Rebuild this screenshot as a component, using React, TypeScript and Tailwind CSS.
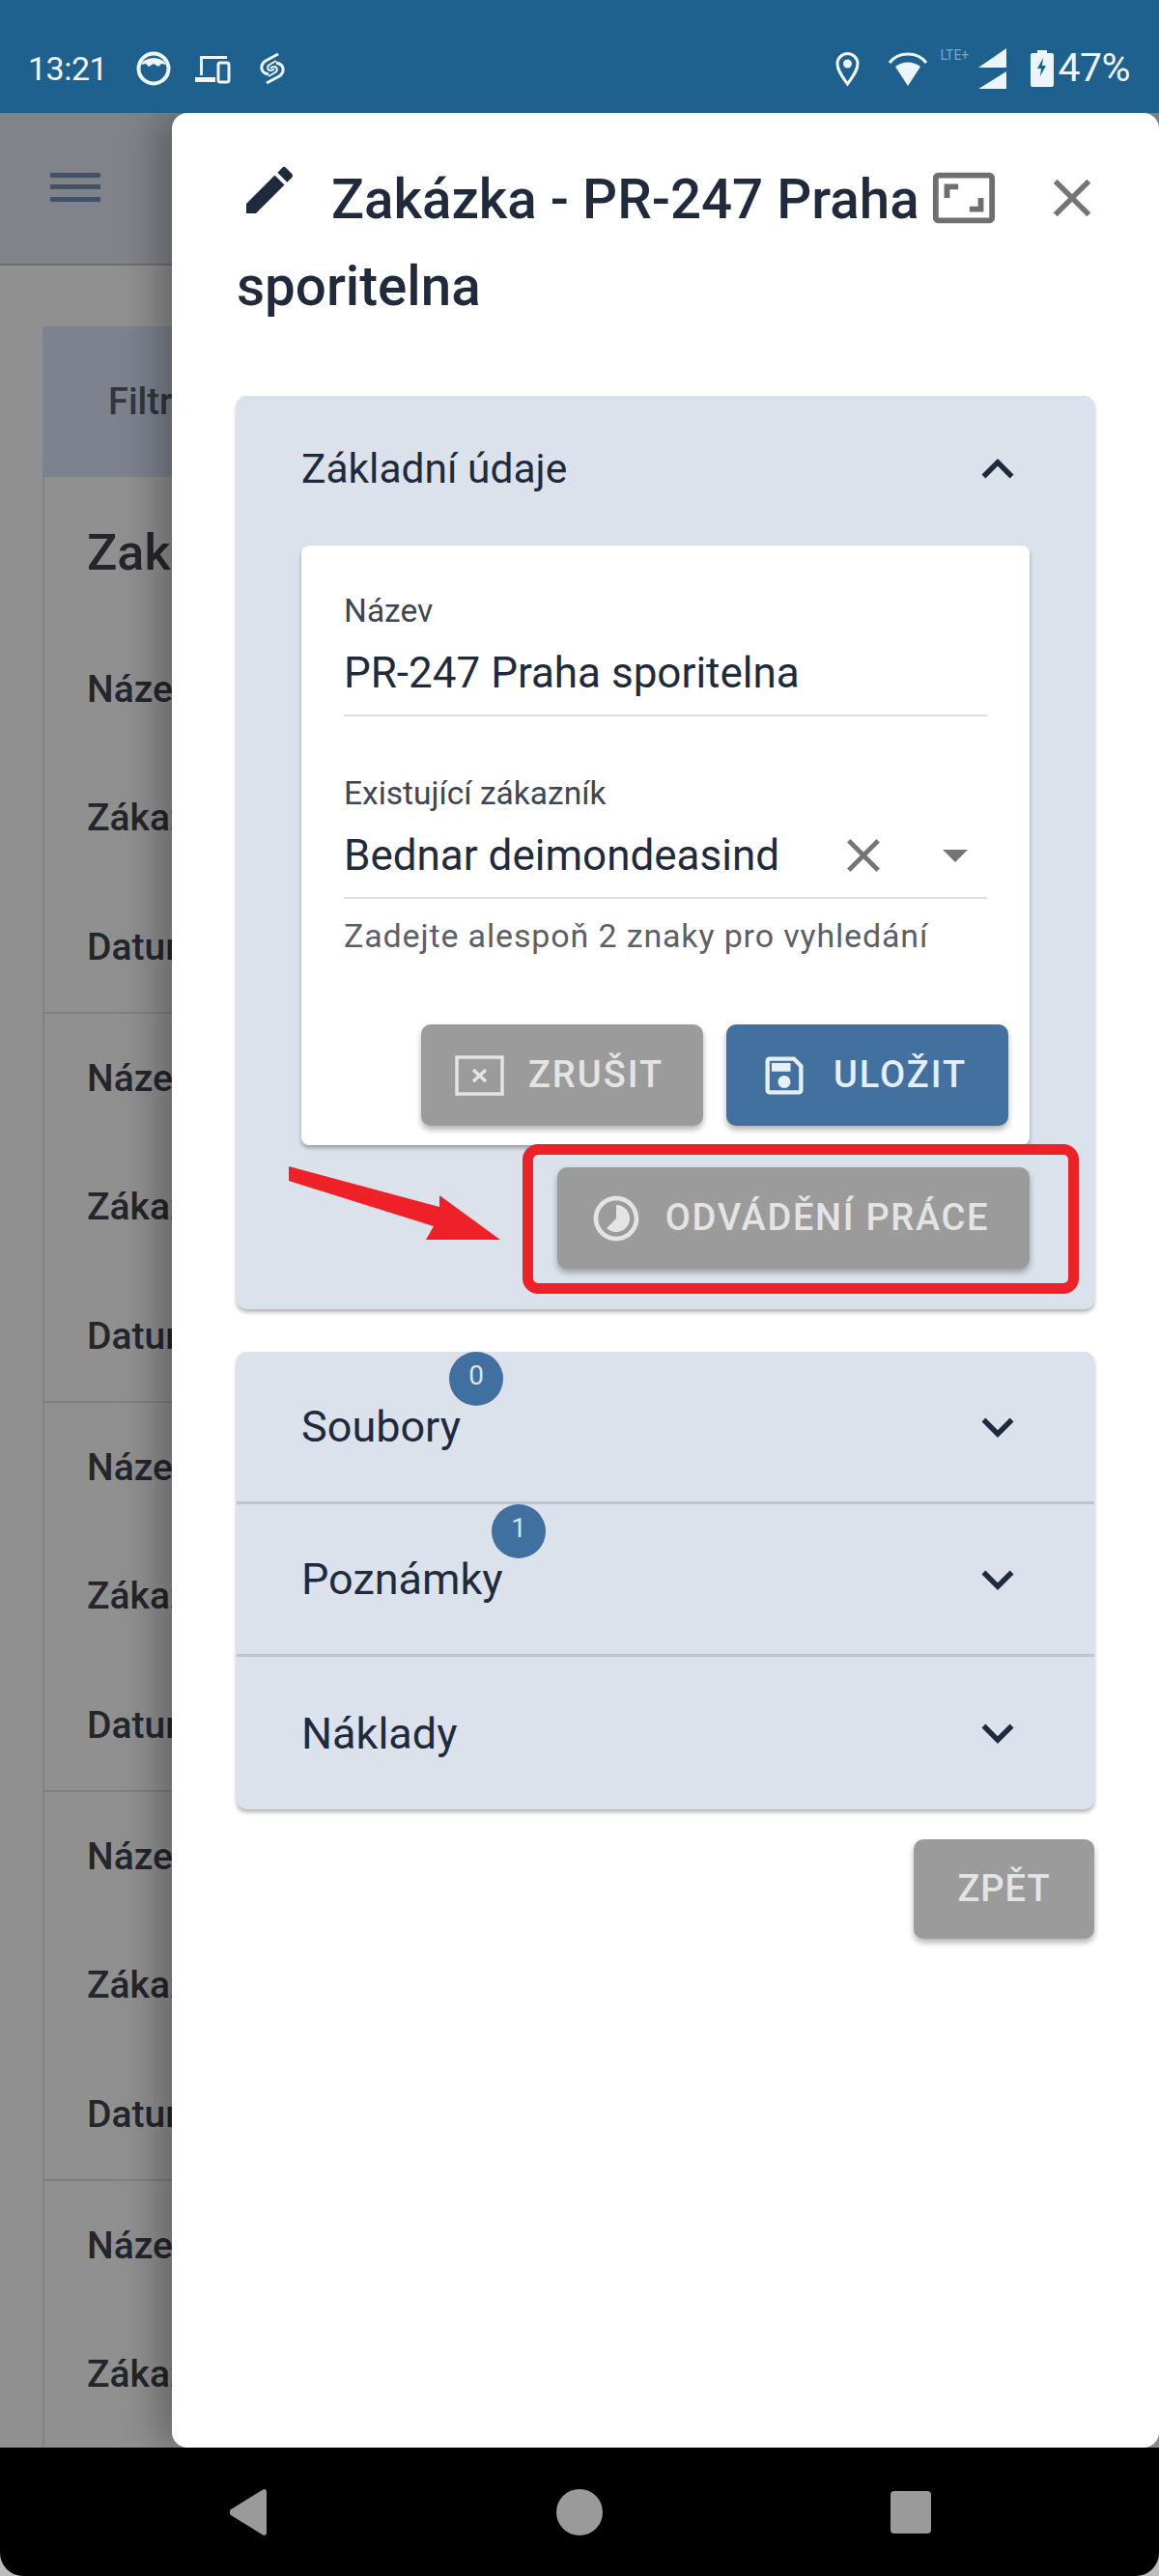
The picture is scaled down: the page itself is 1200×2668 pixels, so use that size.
const MUI = {
  edit: 'M3 17.25V21h3.75L17.81 9.94l-3.75-3.75L3 17.25zM20.71 7.04c.39-.39.39-1.02 0-1.41l-2.34-2.34a.9959.9959 0 0 0-1.41 0l-1.83 1.83 3.75 3.75 1.83-1.83z',
  close: 'M19 6.41 17.59 5 12 10.59 6.41 5 5 6.41 10.59 12 5 17.59 6.41 19 12 13.41 17.59 19 19 17.59 13.41 12z',
  expandMore: 'M16.59 8.59 12 13.17 7.41 8.59 6 10l6 6 6-6z',
  expandLess: 'm12 8-6 6 1.41 1.41L12 10.83l4.59 4.58L18 14z',
  fullscreen: 'M19 12h-2v3h-3v2h5v-5zM7 9h3V7H5v5h2V9zm14-6H3c-1.1 0-2 .9-2 2v14c0 1.1.9 2 2 2h18c1.1 0 2-.9 2-2V5c0-1.1-.9-2-2-2zm0 16.01H3V4.99h18v14.02z',
  save: 'M17 3H5c-1.11 0-2 .9-2 2v14c0 1.1.89 2 2 2h14c1.1 0 2-.9 2-2V7l-4-4zm2 16H5V5h11.17L19 7.83V19zm-7-7c-1.66 0-3 1.34-3 3s1.34 3 3 3 3-1.34 3-3-1.34-3-3-3zM6 6h9v4H6z',
  timelapse: 'M16.24 7.76C15.07 6.59 13.54 6 12 6v6l-4.24 4.24c2.34 2.34 6.14 2.34 8.49 0 2.34-2.34 2.34-6.14-.01-8.48zM12 2C6.48 2 2 6.48 2 12s4.48 10 10 10 10-4.48 10-10S17.52 2 12 2zm0 18c-4.42 0-8-3.58-8-8s3.58-8 8-8 8 3.58 8 8-3.58 8-8 8z',
};

function Icon({ d, className }: { d: string; className: string }) {
  return (
    <svg viewBox="0 0 24 24" fill="currentColor" className={className}>
      <path d={d} />
    </svg>
  );
}

function StatusBar() {
  return (
    <div className="h-[117px] shrink-0 bg-[#1f618e] text-[#eef5fa] flex items-center pt-[24px] pl-[29px] pr-[30px]">
      <span className="text-[34px] leading-none w-[77px] whitespace-nowrap tracking-[-0.5px]">13:21</span>
      <svg viewBox="0 0 36 38" className="w-[36px] h-[38px] ml-[35px]">
        <circle cx="18" cy="19" r="15.5" fill="none" stroke="currentColor" strokeWidth="4" />
        <path d="M5 15c3-9 23-9 26 0l-5-1-3 3-5-3-5 3-3-3z" fill="currentColor" />
      </svg>
      <svg viewBox="0 0 38 32" className="w-[38px] h-[32px] ml-[24px]">
        <path d="M6 3h28v3H9v17H6zM1 25h21v5H1z" fill="currentColor" />
        <rect x="25" y="10" width="11" height="20" rx="2" fill="none" stroke="currentColor" strokeWidth="3" />
      </svg>
      <svg viewBox="0 0 28 36" className="w-[28px] h-[36px] ml-[29px]" fill="none" stroke="currentColor" strokeWidth="3">
        <path d="M20 3 7 10c-6 4-5 11 0 13l3 1" />
        <path d="M8 33l13-7c6-4 5-11 0-13l-3-1" />
        <path d="M18 10l-7 4c-3 2-2 6 1 6l4-1M10 26l7-4c3-2 2-6-1-6l-4 1" strokeWidth="2" />
      </svg>
      <svg viewBox="0 0 27 38" className="w-[27px] h-[38px] ml-auto" fill="none" stroke="currentColor" strokeWidth="3">
        <path d="M13.5 35C8 27 3 21 3 14a10.5 10.5 0 0 1 21 0c0 7-5 13-10.5 21z" />
        <circle cx="13.5" cy="14" r="3" fill="currentColor" />
      </svg>
      <svg viewBox="0 0 44 38" className="w-[44px] h-[38px] ml-[27px]">
        <path d="M22 37 9 17a21 21 0 0 1 26 0z" fill="currentColor" />
        <path d="M3 13C12 1 32 1 41 13" fill="none" stroke="currentColor" strokeWidth="3" />
      </svg>
      <span className="text-[14px] leading-none self-start mt-[26px] ml-[11px] w-[35px] text-[#7fa5c0]">LTE+</span>
      <svg viewBox="0 0 32 44" className="w-[32px] h-[44px] ml-[3px]" fill="currentColor">
        <path d="M31 1v20H2zM31 25v18H2z" />
      </svg>
      <svg viewBox="0 0 24 38" className="w-[24px] h-[38px] ml-[24px]" fill="currentColor">
        <path d="M7 0h10v3h5a2 2 0 0 1 2 2v31a2 2 0 0 1-2 2H2a2 2 0 0 1-2-2V5a2 2 0 0 1 2-2h5z" />
        <path d="M13 8 7 19h4l-1 8 6-11h-4z" fill="#1f618e" />
      </svg>
      <span className="text-[41px] leading-none ml-[4px] whitespace-nowrap tracking-[-0.5px]">47%</span>
    </div>
  );
}

function BackgroundRows() {
  return (
    <div className="h-[403px] border-b-2 border-[#7f7f7f] flex flex-col pl-[44px] text-[39px] font-medium text-[#24262c]">
      <div className="h-[134px] flex items-center">Název</div>
      <div className="h-[133px] flex items-center">Zákazník</div>
      <div className="h-[134px] flex items-center">Datum</div>
    </div>
  );
}

function BackgroundPage() {
  return (
    <div className="h-full bg-[#909090] flex flex-col">
      <div className="h-[158px] shrink-0 bg-[#80848a] border-b-2 border-[#6d6e70] flex items-center pl-[52px] pb-[2px]">
        <svg viewBox="0 0 52 32" className="w-[52px] h-[32px]" fill="#3f5266">
          <rect y="1" width="52" height="5" rx="1" />
          <rect y="13" width="52" height="5" rx="1" />
          <rect y="26" width="52" height="5" rx="1" />
        </svg>
      </div>
      <div className="ml-[44px] mt-[63px] h-[156px] shrink-0 bg-[#7d838e] flex items-center pl-[68px] text-[38px] font-medium text-[#33363c]">
        Filtry
      </div>
      <div className="ml-[44px] border-l-2 border-[#828282] flex-1 overflow-hidden">
        <div className="h-[153px] flex items-center pl-[44px] pt-[4px] text-[52px] font-medium text-[#24262c]">Zakázky</div>
        <BackgroundRows />
        <BackgroundRows />
        <BackgroundRows />
        <BackgroundRows />
        <BackgroundRows />
      </div>
    </div>
  );
}

function CountBadge({ count, className }: { count: number; className: string }) {
  return (
    <span className={`absolute w-[56px] h-[56px] rounded-full bg-[#3f709f] text-[#d9e4ef] text-[28px] flex items-center justify-center pb-[6px] ${className}`}>
      {count}
    </span>
  );
}

function AccordionRow({ title, last, children }: { title: string; last?: boolean; children?: React.ReactNode }) {
  return (
    <div className={`relative h-[158px] flex items-center justify-between pl-[67px] pr-[67px] text-[45px] text-[#1f2b3d] ${last ? '' : 'border-b-[3px] border-[#bcc5d0]'}`}>
      <span className="leading-none">{title}</span>
      <Icon d={MUI.expandMore} className="w-[66px] h-[66px]" />
      {children}
    </div>
  );
}

function ActionButton({ children, className }: { children: React.ReactNode; className: string }) {
  return (
    <button className={`h-[105px] rounded-[10px] flex items-center justify-center text-[38px] font-medium shadow-[0_4px_6px_rgba(0,0,0,0.3)] ${className}`}>
      {children}
    </button>
  );
}

function Drawer() {
  return (
    <div className="absolute inset-y-0 left-[178px] right-0 bg-white rounded-[16px] shadow-[-14px_0_40px_rgba(0,0,0,0.3)] px-[67px] pt-[45px] text-[#1f2b3d]">
      <h2 className="text-[56.5px] font-medium leading-[90px] w-[740px]">
        <Icon d={MUI.edit} className="inline-block w-[64px] h-[64px] mr-[32px] -mt-[28px] ml-[2px]" />
        Zakázka - PR-247 Praha sporitelna
      </h2>
      <div className="absolute top-[53px] right-[57px] flex items-center text-[#757575]">
        <Icon d={MUI.fullscreen} className="w-[70px] h-[70px] text-[#6f6f6f]" />
        <Icon d={MUI.close} className="w-[66px] h-[66px] ml-[44px]" />
      </div>

      <section className="relative mt-[68px] bg-[#dbe2ec] rounded-[10px] shadow-[0_3px_4px_rgba(0,0,0,0.3)] px-[67px] pb-[42px]">
        <div className="h-[155px] flex items-center justify-between text-[42.5px] pb-[4px]">
          <span>Základní údaje</span>
          <Icon d={MUI.expandLess} className="w-[66px] h-[66px]" />
        </div>

        <div className="bg-white rounded-[8px] shadow-[0_3px_4px_rgba(0,0,0,0.3)] pt-[48px] pl-[44px] pr-[22px] pb-[20px]">
          <div className="mr-[22px]">
            <div className="h-[40px] leading-[40px] text-[33.5px] text-[#3b4656]">Název</div>
            <div className="mt-[12px] h-[77px] leading-[64px] border-b-2 border-[#dedede] text-[44px]">PR-247 Praha sporitelna</div>
            <div className="mt-[60px] h-[40px] leading-[40px] text-[33.5px] text-[#3b4656]">Existující zákazník</div>
            <div className="mt-[12px] h-[77px] border-b-2 border-[#dedede] text-[44px] flex items-start justify-between">
              <span className="leading-[64px]">Bednar deimondeasind</span>
              <div className="flex items-center h-[64px] mr-[20px] text-[#757575]">
                <Icon d={MUI.close} className="w-[58px] h-[58px]" />
                <span className="ml-[53px] w-0 h-0 border-x-[13px] border-t-[13px] border-x-transparent border-t-[#757575]" />
              </div>
            </div>
            <div className="mt-[18px] h-[40px] leading-[40px] text-[34px] tracking-[0.85px] text-[#5c6066] whitespace-nowrap">Zadejte alespoň 2 znaky pro vyhledání</div>
          </div>
          <div className="mt-[72px] flex justify-end gap-[24px]">
            <ActionButton className="w-[292px] bg-[#9b9b9b] text-[#e4e4e4] tracking-[2px] pr-[6px]">
              <svg viewBox="0 0 51 42" className="w-[51px] h-[42px] mr-[25px]" fill="none" stroke="currentColor" strokeWidth="3.5">
                <rect x="2" y="2" width="47" height="38" />
                <path d="M19 15l13 12M32 15 19 27" />
              </svg>
              ZRUŠIT
            </ActionButton>
            <ActionButton className="w-[292px] bg-[#42709f] text-[#e6eff8] tracking-[2px] pr-[10px]">
              <Icon d={MUI.save} className="w-[54px] h-[52px] mr-[24px]" />
              ULOŽIT
            </ActionButton>
          </div>
        </div>

        <div className="mt-[23px] flex justify-end">
          <ActionButton className="w-[489px] bg-[#9b9b9b] text-[#e4e4e4] tracking-[1.7px] pr-[9px]">
            <Icon d={MUI.timelapse} className="w-[56px] h-[56px] mr-[23px]" />
            ODVÁDĚNÍ PRÁCE
          </ActionButton>
        </div>

        {/* red annotation over the screenshot */}
        <div className="absolute left-[296px] top-[775px] w-[576px] h-[155px] rounded-[16px] border-[11px] border-[#ee2028]" />
        <svg viewBox="0 0 220 84" className="absolute left-[54px] top-[795px] w-[220px] h-[84px]" fill="#ee2028">
          <path d="M0 3 156 45V33L219 79H142L150 65 0 18z" />
        </svg>
      </section>

      <section className="mt-[44px] bg-[#dbe2ec] rounded-[10px] shadow-[0_3px_4px_rgba(0,0,0,0.3)]">
        <AccordionRow title="Soubory">
          <CountBadge count={0} className="left-[220px] top-0" />
        </AccordionRow>
        <AccordionRow title="Poznámky">
          <CountBadge count={1} className="left-[264px] top-0" />
        </AccordionRow>
        <AccordionRow title="Náklady" last />
      </section>

      <div className="mt-[31px] flex justify-end">
        <button className="w-[187px] h-[103px] rounded-[10px] bg-[#9b9b9b] text-[#e4e4e4] text-[38px] font-medium tracking-[1px] shadow-[0_4px_6px_rgba(0,0,0,0.3)]">
          ZPĚT
        </button>
      </div>
    </div>
  );
}

function NavBar() {
  return (
    <div className="h-[133px] shrink-0 bg-black rounded-b-[24px] relative">
      <div className="h-full flex items-center pl-[238px]">
        <svg viewBox="0 0 38 48" className="w-[38px] h-[48px]" fill="#9a9a9a">
          <path d="M35 0a3 3 0 0 1 3 3v42a3 3 0 0 1-3 3L1 27a4 4 0 0 1 0-6z" />
        </svg>
        <span className="ml-[300px] w-[48px] h-[48px] rounded-full bg-[#9a9a9a]" />
        <span className="ml-[298px] w-[42px] h-[44px] rounded-[4px] bg-[#9a9a9a]" />
      </div>
    </div>
  );
}

export default function App() {
  return (
    <div className="w-[1200px] h-[2668px] flex flex-col overflow-hidden bg-[#bdbdbd] font-['Roboto',sans-serif]">
      <StatusBar />
      <div className="relative flex-1 overflow-hidden min-h-0">
        <BackgroundPage />
        <Drawer />
      </div>
      <NavBar />
    </div>
  );
}
